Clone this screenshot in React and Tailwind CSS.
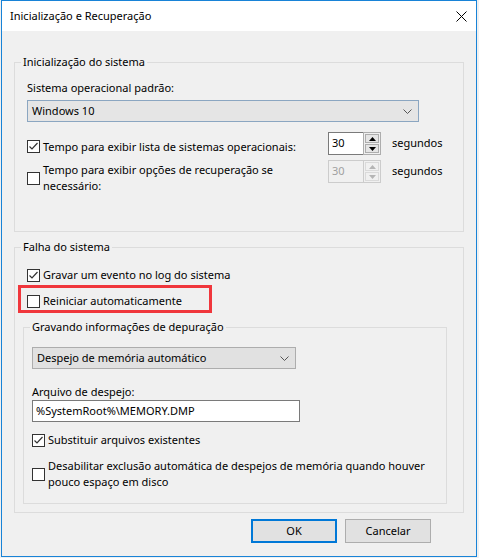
import React from "react";

const font = { fontFamily: '"Noto Sans", "Liberation Sans", sans-serif' };

const Check = ({ checked }) => (
  <span className="w-[13px] h-[13px] shrink-0 border border-[#333333] bg-white flex items-center justify-center">
    {checked && (
      <svg width="11" height="11" viewBox="0 0 11 11">
        <polyline points="1.5,5.5 4,8 9.5,2" fill="none" stroke="#333333" strokeWidth="1.2" />
      </svg>
    )}
  </span>
);

const Arrow = ({ up, color }) => (
  <svg width="7" height="4" viewBox="0 0 7 4">
    {up ? <polygon points="0,4 7,4 3.5,0" fill={color} /> : <polygon points="0,0 7,0 3.5,4" fill={color} />}
  </svg>
);

const Spinner = ({ disabled }) => {
  const edge = disabled ? "border-[#cccccc]" : "border-[#7a7a7a]";
  const btn = disabled ? "border-[#dadada] bg-[#f0f0f0]" : "border-[#adadad] bg-[#e5e5e5]";
  const arrow = disabled ? "#b5b5b5" : "#000000";
  return (
    <div className="flex h-[23px] w-[53px] shrink-0">
      <div
        className={`w-[35px] h-full border border-r-0 ${edge} ${disabled ? "bg-[#f0f0f0] text-[#a0a0a0]" : "bg-white text-black"} pl-[3px] leading-[20px]`}
      >
        30
      </div>
      <div
        className={`w-[18px] h-full border ${disabled ? "border-[#cccccc]" : "border-[#adadad]"} bg-[#f0f0f0] flex flex-col gap-[1px] p-[1px]`}
      >
        <div className={`flex-1 border ${btn} flex items-center justify-center`}>
          <Arrow up color={arrow} />
        </div>
        <div className={`flex-1 border ${btn} flex items-center justify-center`}>
          <Arrow color={arrow} />
        </div>
      </div>
    </div>
  );
};

const Chevron = () => (
  <svg width="9" height="5" viewBox="0 0 9 5">
    <polyline points="0.5,0.5 4.5,4.5 8.5,0.5" fill="none" stroke="#555555" strokeWidth="1" />
  </svg>
);

const Legend = ({ children }) => (
  <legend className="ml-[6px] px-[2px] leading-[16px]">{children}</legend>
);

export default function App() {
  return (
    <div className="w-[479px] h-[558px] bg-[#f0f0f0] pl-[1px] text-[11px] text-black" style={font}>
      <div className="w-[476px] h-[557px] border border-[#1883d7] flex flex-col">
        <div className="h-[30px] bg-white flex items-center justify-between pl-[8px] pr-[9px]">
          <span className="leading-[16px]">Inicialização e Recuperação</span>
          <svg width="11" height="11" viewBox="0 0 11 11">
            <path d="M0.5 0.5 L10.5 10.5 M10.5 0.5 L0.5 10.5" stroke="#000000" strokeWidth="1" />
          </svg>
        </div>

        <fieldset className="mt-[23px] mx-[12px] border border-[#dcdcdc]">
          <Legend>Inicialização do sistema</Legend>
          <div className="px-[12px] pt-[10px] pb-[37px]">
            <div className="leading-[16px]">Sistema operacional padrão:</div>
            <div className="mt-[4px] h-[22px] w-[392px] border border-[#8ba6c1] bg-[#e5e5e5] flex items-center justify-between pl-[4px] pr-[6px]">
              <span className="leading-[16px]">Windows 10</span>
              <Chevron />
            </div>

            <div className="mt-[10px] flex">
              <div className="w-[301px] mt-[6px] flex items-center gap-[3px] leading-[16px]">
                <Check checked />
                <span>Tempo para exibir lista de sistemas operacionais:</span>
              </div>
              <Spinner />
              <span className="ml-[11px] leading-[16px] mt-[3px]">segundos</span>
            </div>

            <div className="mt-[5px] flex">
              <div className="w-[301px] mt-[2px] flex items-center gap-[3px] leading-[16px]">
                <Check />
                <span>
                  Tempo para exibir opções de recuperação se
                  <br />
                  necessário:
                </span>
              </div>
              <Spinner disabled />
              <span className="ml-[11px] leading-[16px] mt-[3px]">segundos</span>
            </div>
          </div>
        </fieldset>

        <fieldset className="mt-[7px] mx-[12px] border border-[#dcdcdc]">
          <Legend>Falha do sistema</Legend>
          <div className="pt-[12px] pb-[8px]">
            <div className="ml-[12px] flex items-center gap-[3px] leading-[16px]">
              <Check checked />
              <span>Gravar um evento no log do sistema</span>
            </div>
            <div className="relative mt-[10px] ml-[12px] flex items-center gap-[3px] leading-[16px]">
              <Check />
              <span>Reiniciar automaticamente</span>
              <div className="absolute -left-[9px] -top-[8px] w-[194px] h-[28px] border-[3px] border-[#f0363c] pointer-events-none" />
            </div>

            <fieldset className="mt-[10px] ml-[8px] w-[424px] border border-[#dcdcdc]">
              <Legend>Gravando informações de depuração</Legend>
              <div className="px-[8px] pt-[12px] pb-[13px]">
                <div className="h-[22px] w-[264px] border border-[#adadad] bg-[#e1e1e1] flex items-center justify-between pl-[4px] pr-[6px]">
                  <span className="leading-[16px]">Despejo de memória automático</span>
                  <Chevron />
                </div>
                <div className="mt-[15px] leading-[16px]">Arquivo de despejo:</div>
                <div className="h-[22px] w-[268px] border border-[#7a7a7a] bg-white flex items-center pl-[3px]">
                  <span className="leading-[16px]">%SystemRoot%\MEMORY.DMP</span>
                </div>
                <div className="mt-[10px] flex items-center gap-[3px] leading-[16px]">
                  <Check checked />
                  <span>Substituir arquivos existentes</span>
                </div>
                <div className="mt-[10px] flex items-center gap-[3px] leading-[16px]">
                  <Check />
                  <span>
                    Desabilitar exclusão automática de despejos de memória quando houver
                    <br />
                    pouco espaço em disco
                  </span>
                </div>
              </div>
            </fieldset>
          </div>
        </fieldset>

        <div className="mt-[6px] flex justify-end gap-[8px] pr-[45px]">
          <button className="w-[86px] h-[24px] border-2 border-[#0078d7] bg-[#e1e1e1] leading-[16px]">OK</button>
          <button className="w-[86px] h-[24px] border border-[#adadad] bg-[#e1e1e1] leading-[16px]">Cancelar</button>
        </div>
      </div>
    </div>
  );
}
